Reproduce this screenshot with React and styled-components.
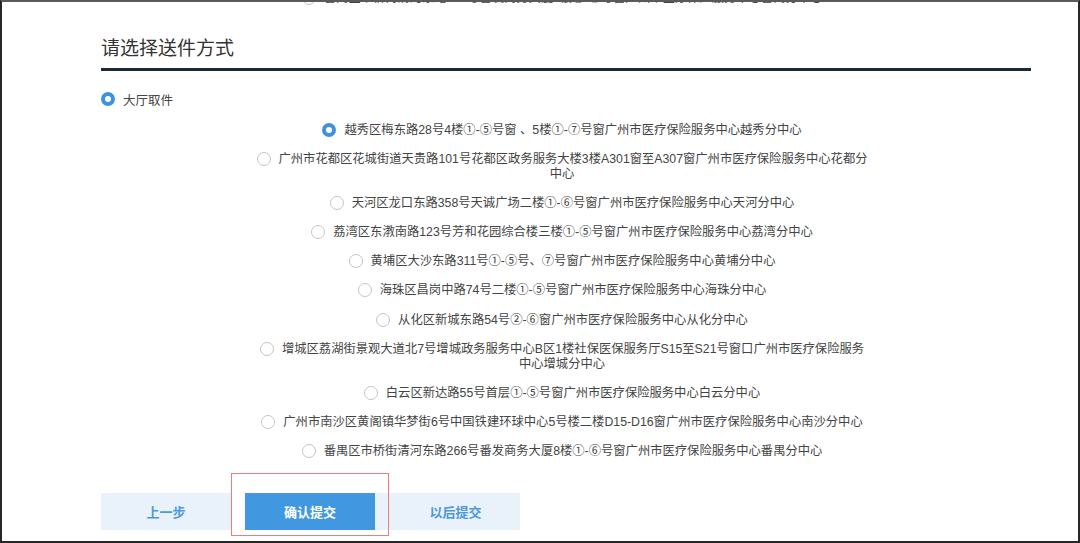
import React from "react";
import styled, { createGlobalStyle } from "styled-components";

const Global = createGlobalStyle`
  html, body { margin: 0; padding: 0; background: #fff; }
  body { font-family: "Liberation Sans", "Noto Sans CJK SC", sans-serif; }
  * { box-sizing: border-box; }
`;

const Frame = styled.div`
  position: relative;
  width: 1080px;
  height: 543px;
  overflow: hidden;
  background: #fff;
  border: 2px solid #262626;
  border-top-color: #5a5a5a;
`;

const Content = styled.div`
  padding: 0 47px 0 99px;
`;

const OptionList = styled.div`
  width: 660px;
  margin-left: 131px;
  margin-top: ${(p) => p.$top || 0}px;
  display: flex;
  flex-direction: column;
  gap: 14.1px;
`;

const Option = styled.label`
  display: block;
  text-align: center;
  font-size: 12.3px;
  line-height: 15px;
  color: #444;
  cursor: pointer;
`;

const Radio = styled.span`
  display: inline-block;
  width: 14px;
  height: 14px;
  border-radius: 50%;
  vertical-align: -3px;
  margin-right: 8px;
  background: #fff;
  border: ${(p) => (p.$checked ? "4px solid #3f92de" : "1px solid #c4c4c4")};
`;

const Heading = styled.h2`
  margin: 31px 0 0;
  padding: 0 0 7px;
  font-size: 19px;
  line-height: 24px;
  font-weight: normal;
  color: #333;
  border-bottom: 3px solid #1c2935;
`;

const Method = styled.label`
  display: flex;
  align-items: center;
  margin-top: 20px;
  height: 16px;
  font-size: 12.5px;
  color: #444;
`;

const Buttons = styled.div`
  display: flex;
  margin-top: 34px;
  gap: 14px;
`;

const Button = styled.button`
  border: none;
  outline: none;
  height: 37px;
  width: ${(p) => p.$w || 130}px;
  padding: 0 0 0 ${(p) => p.$pl || 0}px;
  margin-left: ${(p) => p.$ml || 0}px;
  font-family: inherit;
  font-size: 13px;
  font-weight: bold;
  background: ${(p) => (p.$primary ? "#4197e0" : "#e9f2fb")};
  color: ${(p) => (p.$primary ? "#fff" : "#4b98de")};
  cursor: pointer;
`;

const Highlight = styled.div`
  position: absolute;
  left: 229px;
  top: 471px;
  width: 158px;
  height: 63px;
  border: 1px solid #ef7b7b;
  pointer-events: none;
`;

const options = [
  ["越秀区梅东路28号4楼①-⑤号窗 、5楼①-⑦号窗广州市医疗保险服务中心越秀分中心"],
  ["广州市花都区花城街道天贵路101号花都区政务服务大楼3楼A301窗至A307窗广州市医疗保险服务中心花都分", "中心"],
  ["天河区龙口东路358号天诚广场二楼①-⑥号窗广州市医疗保险服务中心天河分中心"],
  ["荔湾区东漖南路123号芳和花园综合楼三楼①-⑤号窗广州市医疗保险服务中心荔湾分中心"],
  ["黄埔区大沙东路311号①-⑤号、⑦号窗广州市医疗保险服务中心黄埔分中心"],
  ["海珠区昌岗中路74号二楼①-⑤号窗广州市医疗保险服务中心海珠分中心"],
  ["从化区新城东路54号②-⑥窗广州市医疗保险服务中心从化分中心"],
  ["增城区荔湖街景观大道北7号增城政务服务中心B区1楼社保医保服务厅S15至S21号窗口广州市医疗保险服务", "中心增城分中心"],
  ["白云区新达路55号首层①-⑤号窗广州市医疗保险服务中心白云分中心"],
  ["广州市南沙区黄阁镇华梦街6号中国铁建环球中心5号楼二楼D15-D16窗广州市医疗保险服务中心南沙分中心"],
  ["番禺区市桥街清河东路266号番发商务大厦8楼①-⑥号窗广州市医疗保险服务中心番禺分中心"],
];

function OptionRow({ lines, checked }) {
  return (
    <Option>
      <Radio $checked={checked} />
      {lines[0]}
      {lines[1] && (
        <>
          <br />
          {lines[1]}
        </>
      )}
    </Option>
  );
}

export default function App() {
  return (
    <>
      <Global />
      <Frame>
        <Content>
          <OptionList $top={-11}>
            <OptionRow lines={["番禺区市桥街清河东路266号番发商务大厦8楼①-⑥号窗广州市医疗保险服务中心番禺分中心"]} />
          </OptionList>
          <Heading>请选择送件方式</Heading>
          <Method>
            <Radio $checked />
            大厅取件
          </Method>
          <OptionList $top={16}>
            {options.map((o, i) => (
              <OptionRow key={i} lines={o} checked={i === 0} />
            ))}
          </OptionList>
          <Buttons>
            <Button>上一步</Button>
            <Button $primary>确认提交</Button>
            <Button $w={145} $pl={16} $ml={-14}>以后提交</Button>
          </Buttons>
        </Content>
        <Highlight />
      </Frame>
    </>
  );
}
